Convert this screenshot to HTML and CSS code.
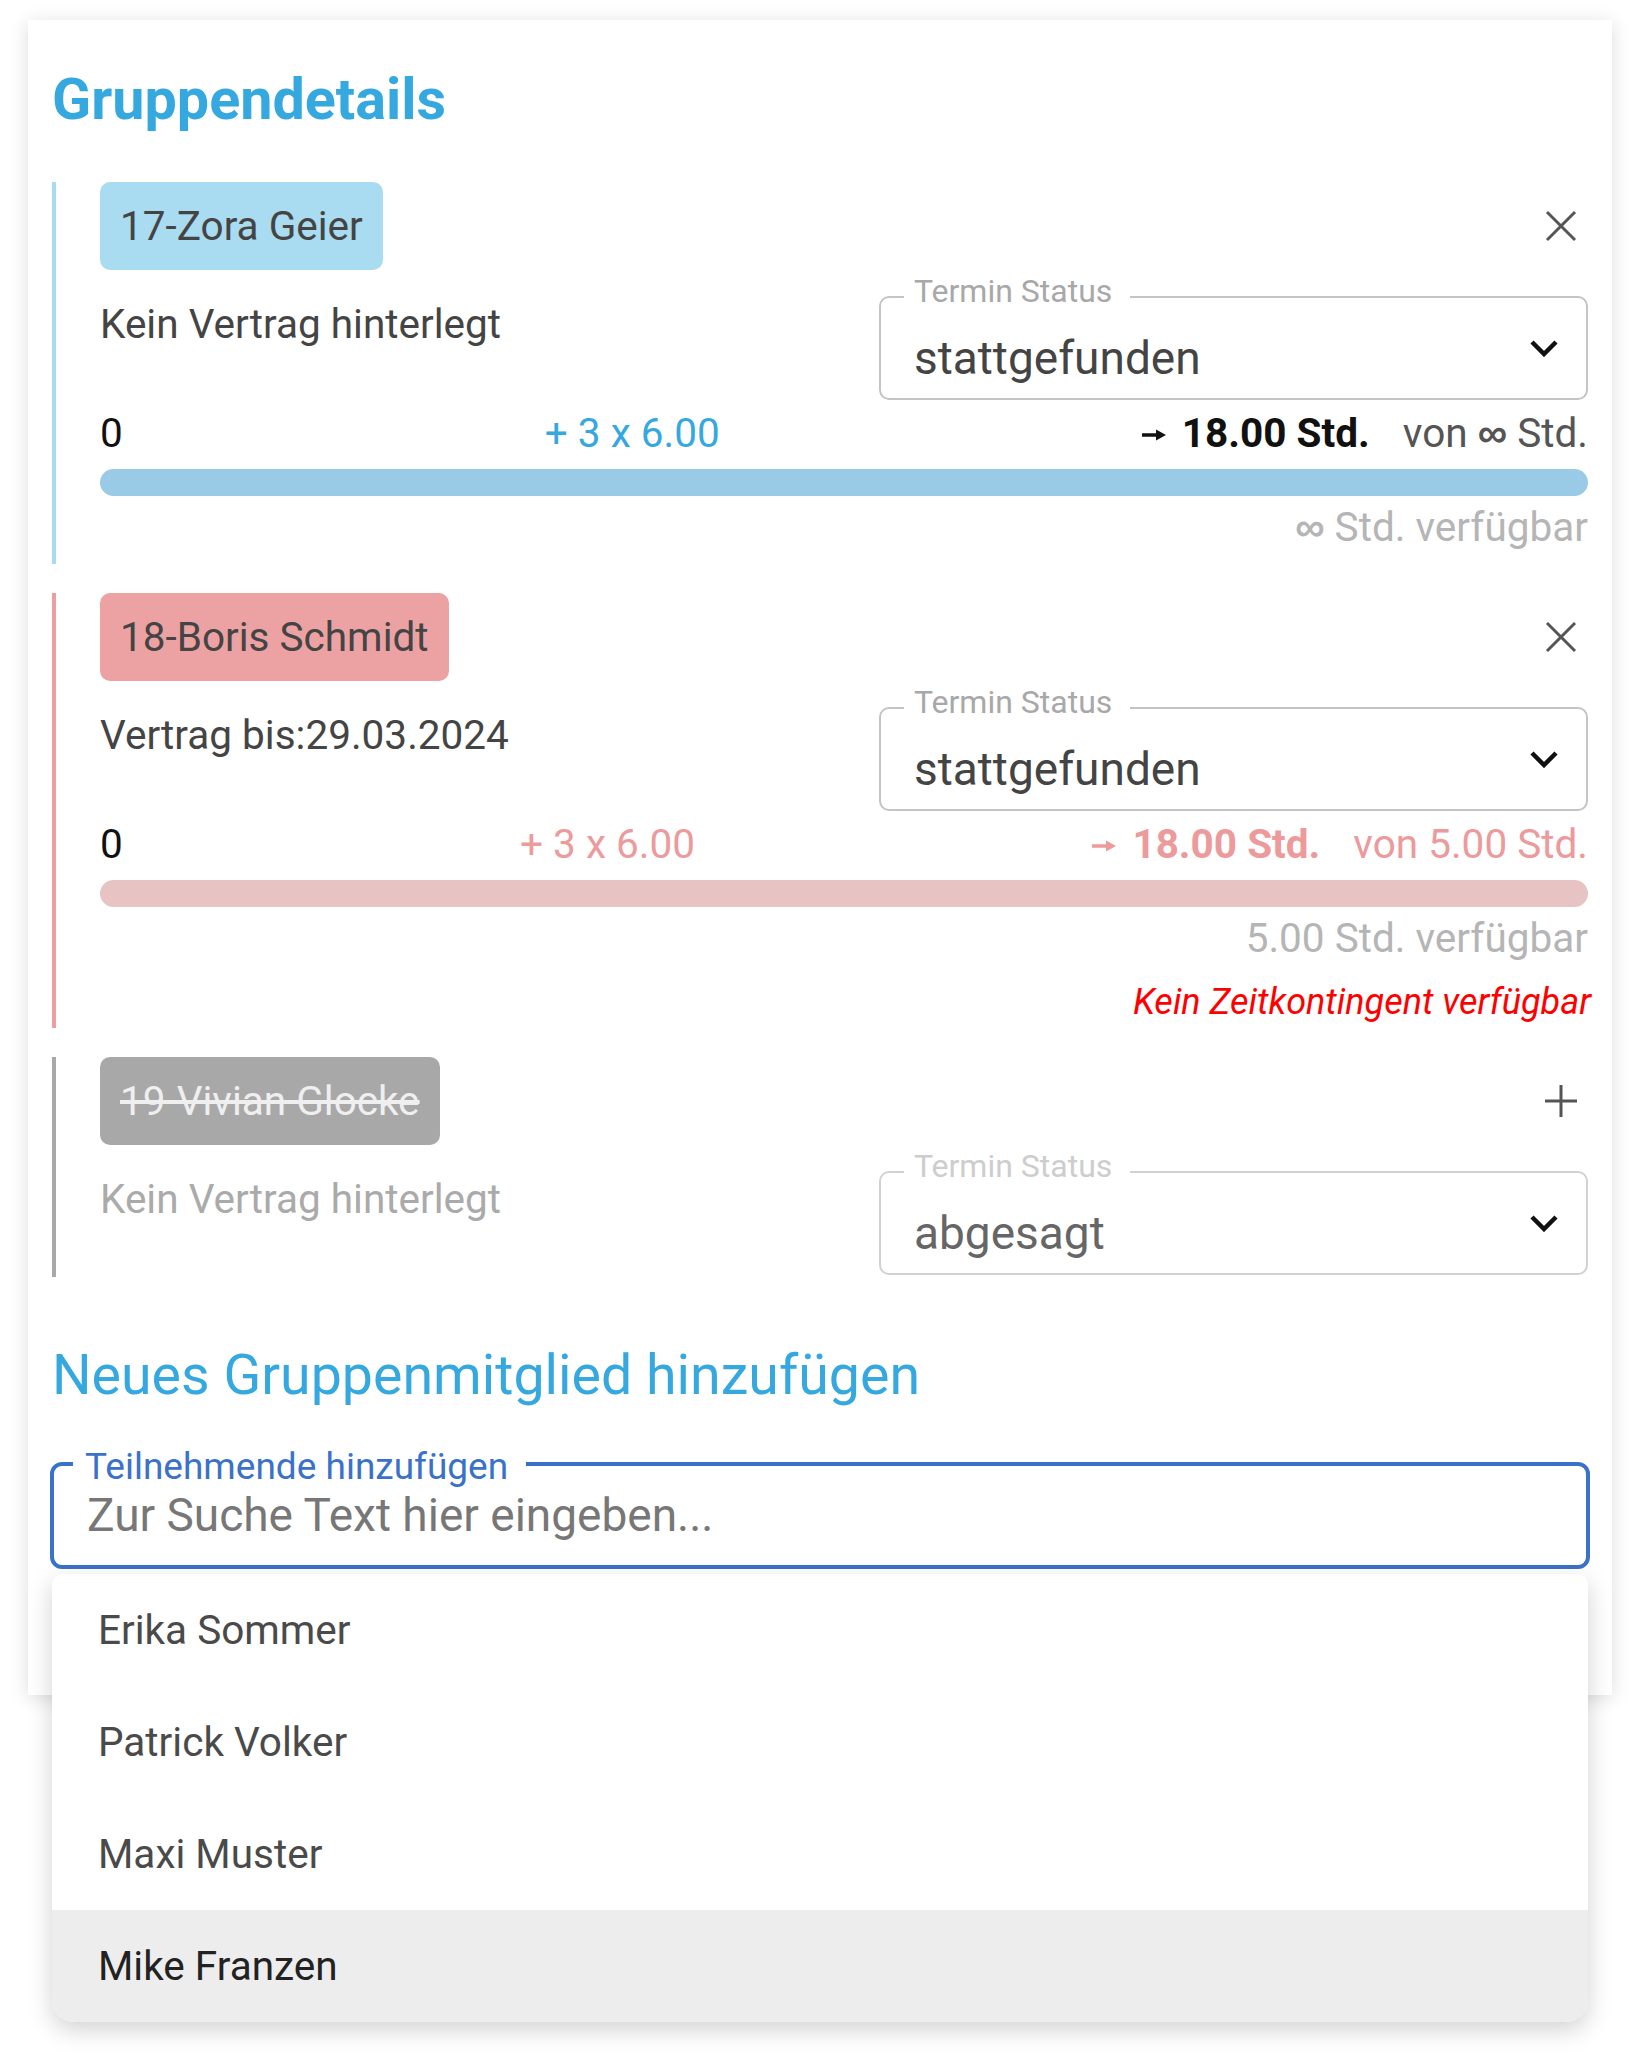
FILE: index.html
```html
<!DOCTYPE html>
<html lang="de">
<head>
  <meta charset="UTF-8" />
  <meta name="viewport" content="width=device-width, initial-scale=1.0" />
  <title>Gruppendetails</title>
  <link rel="stylesheet" href="styles.css">
</head>
<body>
  <div class="card">
    <h1>Gruppendetails</h1>

    <div class="members">
      <!-- Teilnehmer 17 -->
      <div class="member member-blue">
        <div class="member-head">
          <span class="chip">17-Zora Geier</span>
          <svg class="icon" width="32" height="32" viewBox="0 0 32 32"><path d="M2 2 L30 30 M30 2 L2 30" /></svg>
        </div>
        <div class="member-body">
          <div class="contract">Kein Vertrag hinterlegt</div>
          <div class="select">
            <span class="select-label">Termin Status</span>
            <span class="select-value">stattgefunden</span>
            <svg class="chevron" width="30" height="18" viewBox="0 0 30 18"><polyline points="3,3 15,15 27,3" /></svg>
          </div>
        </div>
        <div class="hours">
          <span class="hours-start">0</span>
          <span class="hours-add">+ 3 x 6.00</span>
          <span class="hours-total"><b><svg class="arrow" width="24" height="16" viewBox="0 0 24 16"><path d="M0 8 H17" /><polygon points="14,2.5 24,8 14,13.5" /></svg> 18.00 Std.</b><span class="hours-of">von <span class="inf">∞</span> Std.</span></span>
        </div>
        <div class="bar"></div>
        <div class="avail"><span class="inf">∞</span> Std. verfügbar</div>
      </div>

      <!-- Teilnehmer 18 -->
      <div class="member member-red">
        <div class="member-head">
          <span class="chip">18-Boris Schmidt</span>
          <svg class="icon" width="32" height="32" viewBox="0 0 32 32"><path d="M2 2 L30 30 M30 2 L2 30" /></svg>
        </div>
        <div class="member-body">
          <div class="contract">Vertrag bis:29.03.2024</div>
          <div class="select">
            <span class="select-label">Termin Status</span>
            <span class="select-value">stattgefunden</span>
            <svg class="chevron" width="30" height="18" viewBox="0 0 30 18"><polyline points="3,3 15,15 27,3" /></svg>
          </div>
        </div>
        <div class="hours">
          <span class="hours-start">0</span>
          <span class="hours-add">+ 3 x 6.00</span>
          <span class="hours-total"><b><svg class="arrow" width="24" height="16" viewBox="0 0 24 16"><path d="M0 8 H17" /><polygon points="14,2.5 24,8 14,13.5" /></svg> 18.00 Std.</b><span class="hours-of">von 5.00 Std.</span></span>
        </div>
        <div class="bar"></div>
        <div class="avail">5.00 Std. verfügbar</div>
        <div class="error">Kein Zeitkontingent verfügbar</div>
      </div>

      <!-- Teilnehmer 19 (abgesagt) -->
      <div class="member member-gray">
        <div class="member-head">
          <span class="chip">19-Vivian Glocke</span>
          <svg class="icon" width="32" height="32" viewBox="0 0 32 32"><path d="M16 0 L16 32 M0 16 L32 16" /></svg>
        </div>
        <div class="member-body">
          <div class="contract">Kein Vertrag hinterlegt</div>
          <div class="select">
            <span class="select-label">Termin Status</span>
            <span class="select-value">abgesagt</span>
            <svg class="chevron" width="30" height="18" viewBox="0 0 30 18"><polyline points="3,3 15,15 27,3" /></svg>
          </div>
        </div>
      </div>
    </div>

    <h2>Neues Gruppenmitglied hinzufügen</h2>

    <div class="search">
      <div class="search-field">
        <span class="search-label">Teilnehmende hinzufügen</span>
        <span class="search-placeholder">Zur Suche Text hier eingeben...</span>
      </div>
      <ul class="options">
        <li>Erika Sommer</li>
        <li>Patrick Volker</li>
        <li>Maxi Muster</li>
        <li class="active">Mike Franzen</li>
      </ul>
    </div>
  </div>
</body>
</html>
```

FILE: styles.css
```css
* { box-sizing: border-box; }
body {
  margin: 0;
  min-height: 100vh;
  padding-bottom: 360px;
  background: #fff;
  font-family: Roboto, 'Liberation Sans', sans-serif;
  font-size: 40.5px;
  line-height: 1.17;
  color: #444;
}
.card {
  margin: 20px 28px 0;
  padding: 46px 24px 126px;
  background: #fff;
  box-shadow: 0 3px 18px rgba(0, 0, 0, 0.14);
}
h1 {
  margin: 0 0 49px;
  font-size: 57.5px;
  font-weight: bold;
  color: #35a8e0;
}
h2 {
  margin: 67px 0 0;
  font-size: 55.5px;
  font-weight: normal;
  color: #35a8e0;
}

/* Teilnehmer */
.members {
  display: flex;
  flex-direction: column;
  gap: 29px;
}
.member {
  border-left: 4px solid #a9dbf1;
  padding: 0 0 2px 44px;
}
.member-head {
  display: flex;
  justify-content: space-between;
  align-items: center;
}
.chip {
  display: inline-block;
  padding: 20px 20px;
  line-height: 48px;
  border-radius: 10px;
  background: #a9dbf1;
  color: #444;
}
.icon {
  margin-right: 11px;
  fill: none;
  stroke: #555;
  stroke-width: 3;
}
.member-body {
  display: flex;
  justify-content: space-between;
  align-items: flex-start;
}
.contract {
  margin-top: 31px;
}

/* Select */
.select {
  position: relative;
  width: 709px;
  height: 104px;
  margin-top: 26px;
  padding: 34px 27px 0 33px;
  border: 2px solid #c4c4c4;
  border-radius: 10px;
  display: flex;
  justify-content: space-between;
  align-items: flex-start;
}
.select-label {
  position: absolute;
  top: -25px;
  left: 23px;
  padding: 0 18px 0 10px;
  background: #fff;
  font-size: 32px;
  color: #a8a8a8;
}
.select-value {
  font-size: 46px;
  color: #444;
}
.chevron {
  margin-top: 7px;
  fill: none;
  stroke: #111;
  stroke-width: 4.5;
}

/* Stunden */
.hours {
  margin-top: 10px;
  height: 48px;
  display: flex;
  justify-content: space-between;
  align-items: baseline;
}
.hours-start { color: #111; }
.hours-add { color: #35a8e0; }
.hours-total b { color: #111; }
.hours-of {
  margin-left: 33px;
  color: #555;
}
.arrow {
  vertical-align: 4px;
  margin-right: 6px;
  stroke: currentColor;
  stroke-width: 3.5;
  fill: currentColor;
}
.arrow polygon { stroke: none; }
.inf {
  font-family: 'Liberation Sans', sans-serif;
  font-weight: bold;
  font-size: 1.02em;
  line-height: 1;
}
.bar {
  margin-top: 11px;
  height: 27px;
  border-radius: 14px;
  background: #9acbe6;
}
.avail {
  height: 48px;
  margin: 8px 0 10px;
  text-align: right;
  color: #b5b5b5;
}
.error {
  margin: 18px -3px 3px 0;
  text-align: right;
  font-size: 36px;
  font-style: italic;
  color: #f00;
}

.member-red { border-left-color: #ec9fa0; }
.member-red .chip { background: #eca2a3; }
.member-red .hours-add,
.member-red .hours-total b,
.member-red .hours-of { color: #ec9a9b; }
.member-red .bar { background: #e8c3c4; }

.member-gray { border-left-color: #a8a8a8; }
.member-gray .chip {
  background: #a9a8a9;
  color: #efefef;
  text-decoration: line-through;
}
.member-gray .contract { color: #aaa; }
.member-gray .select { border-color: #d2d2d2; }
.member-gray .select-label { color: #cdcdcd; }
.member-gray .select-value { color: #666; }

/* Suche */
.search {
  position: relative;
  margin-top: 53px;
}
.search-field {
  position: relative;
  height: 107px;
  margin: 0 -2px;
  padding: 23px 0 0 33px;
  border: 4px solid #3a72c9;
  border-radius: 12px;
}
.search-label {
  position: absolute;
  top: -21px;
  left: 19px;
  padding: 0 18px 0 12px;
  background: #fff;
  font-size: 37px;
  color: #3a72c9;
}
.search-placeholder {
  font-size: 46px;
  color: #777;
}
.options {
  position: absolute;
  top: calc(100% + 5px);
  left: 0;
  right: 0;
  margin: 0;
  padding: 0;
  list-style: none;
  background: #fff;
  border-radius: 10px 10px 22px 22px;
  box-shadow: 0 8px 24px rgba(0, 0, 0, 0.18);
  overflow: hidden;
}
.options li {
  padding: 32px 46px;
  line-height: 48px;
  color: #4a4a4a;
}
.options li.active {
  background: #ededed;
  color: #222;
}
```
